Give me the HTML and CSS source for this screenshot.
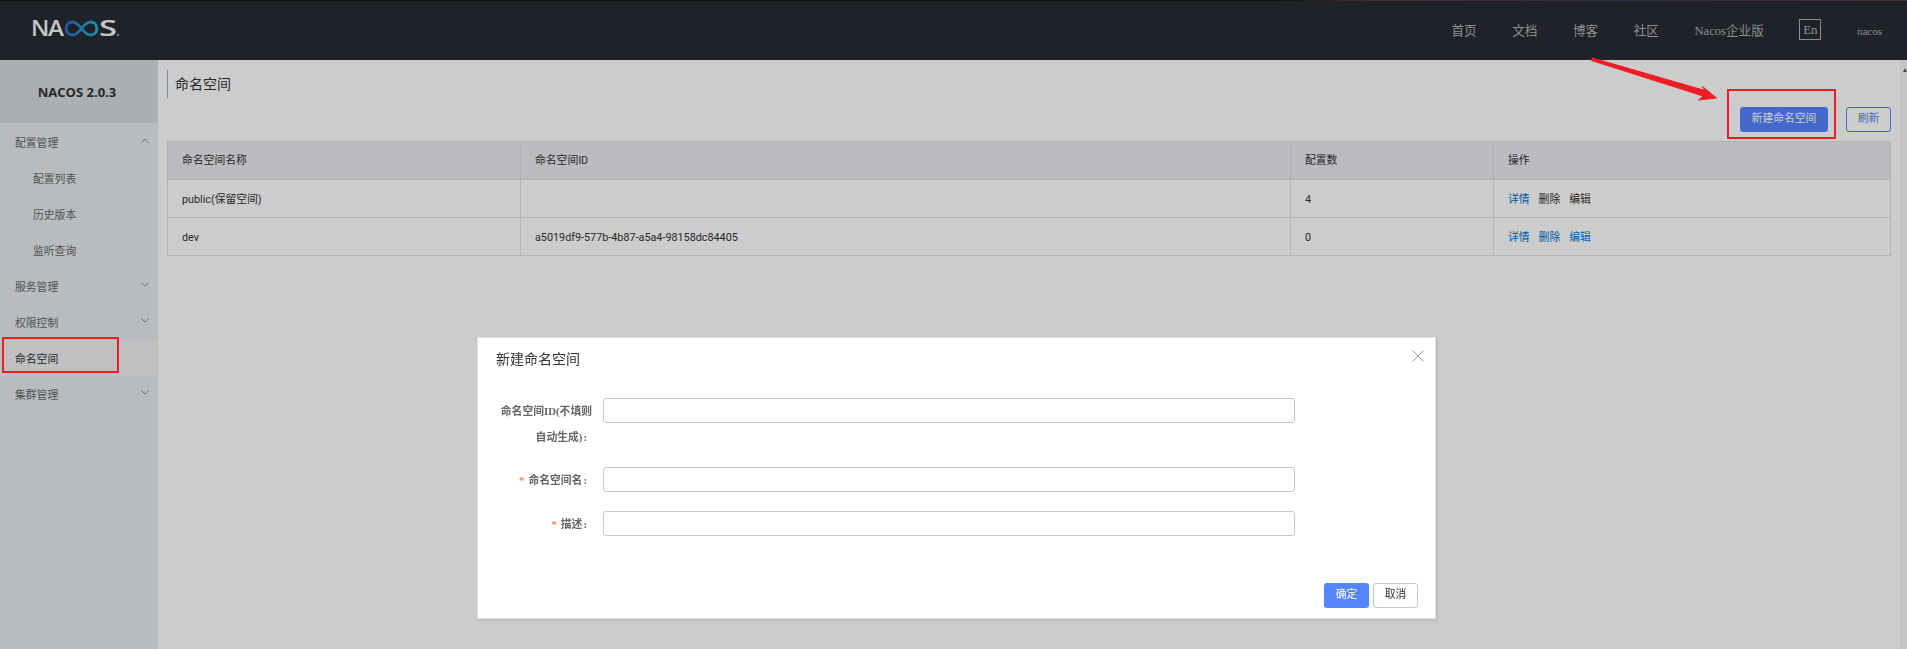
FILE: index.html
```html
<!DOCTYPE html>
<html lang="zh-CN">
<head>
<meta charset="utf-8">
<title>Nacos</title>
<link rel="stylesheet" href="styles.css">
</head>
<body>
<div class="page">
  <header class="topbar">
    <svg class="logo" width="98" height="32" viewBox="-5 -4 98 32">
      <defs>
        <linearGradient id="inf" x1="0" x2="1" y1="0" y2="0">
          <stop offset="0" stop-color="#2a6fd6"/>
          <stop offset="1" stop-color="#22b5d6"/>
        </linearGradient>
      </defs>
      <text class="logo-text" x="-2" y="19" textLength="18.300" lengthAdjust="spacingAndGlyphs">N</text>
      <text class="logo-text" x="15" y="19" textLength="16" lengthAdjust="spacingAndGlyphs">A</text>
      <path d="M48.500 11.500C45 7 42.500 5 39.500 5C35.500 5 33.200 8 33.200 11.500S35.500 18 39.500 18C42.500 18 45 16 48.500 11.500S54.500 5 57.500 5C61.500 5 63.800 8 63.800 11.500S61.500 18 57.500 18C54.500 18 52 16 48.500 11.500Z" fill="none" stroke="url(#inf)" stroke-width="2.800"/>
      <text class="logo-text" x="66" y="19" textLength="18" lengthAdjust="spacingAndGlyphs">S</text>
      <circle cx="85" cy="18" r="1.300" fill="#22b5d6"/>
    </svg>
    <nav class="topnav">
      <a>首页</a><a>文档</a><a>博客</a><a>社区</a><a>Nacos企业版</a>
      <span class="lang">En</span>
      <span class="user">nacos</span>
    </nav>
  </header>
  <div class="main">
    <aside class="sidebar">
      <div class="version">NACOS 2.0.3</div>
      <ul class="menu">
        <li class="item">配置管理<svg class="chev" width="8" height="5" viewBox="0 0 8 5"><polyline points="0.500,4.500 4,1 7.500,4.500"/></svg></li>
        <li class="item sub">配置列表</li>
        <li class="item sub">历史版本</li>
        <li class="item sub">监听查询</li>
        <li class="item">服务管理<svg class="chev" width="8" height="5" viewBox="0 0 8 5"><polyline points="0.500,0.500 4,4 7.500,0.500"/></svg></li>
        <li class="item">权限控制<svg class="chev" width="8" height="5" viewBox="0 0 8 5"><polyline points="0.500,0.500 4,4 7.500,0.500"/></svg></li>
        <li class="item active">命名空间</li>
        <li class="item">集群管理<svg class="chev" width="8" height="5" viewBox="0 0 8 5"><polyline points="0.500,0.500 4,4 7.500,0.500"/></svg></li>
      </ul>
    </aside>
    <main class="content">
      <h1 class="page-title">命名空间</h1>
      <div class="toolbar">
        <button class="btn primary wide">新建命名空间</button>
        <button class="btn outline">刷新</button>
      </div>
      <table class="grid">
        <colgroup>
          <col class="c1"><col class="c2"><col class="c3"><col class="c4">
        </colgroup>
        <thead>
          <tr><th>命名空间名称</th><th>命名空间ID</th><th>配置数</th><th>操作</th></tr>
        </thead>
        <tbody>
          <tr>
            <td>public(保留空间)</td><td></td><td>4</td>
            <td class="ops"><a class="link">详情</a><a>删除</a><a>编辑</a></td>
          </tr>
          <tr>
            <td>dev</td><td>a5019df9-577b-4b87-a5a4-98158dc84405</td><td>0</td>
            <td class="ops"><a class="link">详情</a><a class="link">删除</a><a class="link">编辑</a></td>
          </tr>
        </tbody>
      </table>
    </main>
    <div class="scrollbar"><span class="scroll-up"></span></div>
  </div>
</div>

<div class="mask">
  <section class="dialog">
    <h2 class="dialog-title">新建命名空间</h2>
    <svg class="close" width="12" height="12" viewBox="0 0 12 12"><path d="M0.500 0.500L11.500 11.500M11.500 0.500L0.500 11.500"/></svg>
    <form class="form">
      <label class="label">命名空间ID(不填则自动生成)<span class="colon">:</span></label>
      <input class="input" type="text">
      <label class="label single"><span class="star">*</span>命名空间名<span class="colon">:</span></label>
      <input class="input" type="text">
      <label class="label single"><span class="star">*</span>描述<span class="colon">:</span></label>
      <input class="input" type="text">
    </form>
    <footer class="dialog-foot">
      <button class="btn ok">确定</button>
      <button class="btn cancel">取消</button>
    </footer>
  </section>
</div>

<svg class="marks" width="1907" height="649" viewBox="0 0 1907 649">
  <rect x="3" y="338" width="115" height="34"/>
  <rect x="1728" y="90" width="107" height="48"/>
  <polygon class="arrow" points="1592.500,58 1705,90.500 1702.500,86.500 1716.500,98 1698.500,100 1703,96 1591.500,60.500"/>
</svg>
</body>
</html>
```

FILE: styles.css
```css
* { box-sizing: border-box; }
html, body { margin: 0; height: 100%; overflow: hidden; }
body {
  font-family: "Roboto", "Noto Sans CJK SC", sans-serif;
  font-size: 10.8px;
  color: #333;
  background: #fff;
}
.page { display: flex; flex-direction: column; height: 649px; }

.topbar {
  height: 60px;
  flex: none;
  display: flex;
  align-items: center;
  justify-content: space-between;
  background: #272b33;
  border-top: 1px solid #14161a;
  border-image: linear-gradient(90deg, #14161a 0, #14161a 67%, #5a3a48 72%, #43395a 85%, #5a3a48 100%) 1;
  padding: 0 25px 0 28px;
}
.logo { display: block; margin-top: -3px; }
.logo-text {
  font-family: "Open Sans", sans-serif;
  font-size: 21px;
  font-weight: 600;
  fill: #f6f8f9;
}
.topnav {
  display: flex;
  align-items: center;
  gap: 35.6px;
  font-family: "Liberation Serif", "Noto Sans CJK SC", serif;
  font-size: 12.6px;
  color: #b2b2b2;
  margin-top: -2px;
}
.lang {
  width: 22px;
  height: 21px;
  border: 1px solid #b2b2b2;
  display: flex;
  align-items: center;
  justify-content: center;
  font-size: 13px;
}
.user { font-size: 11px; margin-top: 3px; }

.main { flex: 1; display: flex; min-height: 0; }

.sidebar { width: 158px; flex: none; background: #e8ecef; }
.version {
  height: 63px;
  background: #d7dbdf;
  display: flex;
  align-items: center;
  justify-content: center;
  font-family: "Open Sans", sans-serif;
  font-size: 13px;
  font-weight: 700;
  color: #333;
  padding-right: 4px;
}
.menu { list-style: none; margin: 1px 0 0; padding: 0; }
.item {
  height: 36px;
  display: flex;
  align-items: center;
  justify-content: space-between;
  padding: 0 9px 0 15px;
  color: #666;
}
.item.sub { padding-left: 33px; }
.item.active { background: #f0eff3; color: #333; }
.chev { fill: none; stroke: #888; stroke-width: 1; margin-top: -3px; }

.content { flex: 1; min-width: 0; padding: 10px 9px 0; background: #fff; }
.page-title {
  margin: 0;
  height: 28px;
  border-left: 1px solid #93b5df;
  padding-left: 7px;
  font-size: 14px;
  font-weight: 400;
  line-height: 28px;
  color: #333;
}
.toolbar { display: flex; justify-content: flex-end; gap: 18px; margin: 9px 0; }
.btn {
  height: 25px;
  padding: 0;
  border: 1px solid transparent;
  border-radius: 3px;
  font-family: inherit;
  font-size: 10.8px;
  line-height: 1;
  background: none;
}
.wide { width: 88px; }
.primary { background: #5584ff; color: #fff; }
.outline { width: 45px; border-color: #5584ff; color: #5584ff; }

.grid {
  width: 100%;
  table-layout: fixed;
  border-collapse: collapse;
  color: #333;
}
.c1 { width: 353px; }
.c2 { width: 770px; }
.c3 { width: 203px; }
.grid th, .grid td {
  height: 38px;
  padding: 0 14px;
  border: 1px solid #e1e3e8;
  text-align: left;
  font-weight: 400;
  line-height: 14px;
}
.grid td { padding-top: 2px; }
.grid thead th { background: #ebecf0; border-color: #dcdee3; }
.ops a { margin-right: 9px; }
.ops .link { color: #0073cc; }

.scrollbar { width: 7px; flex: none; background: #f5f5f5; position: relative; }
.scroll-up {
  position: absolute;
  top: 8px;
  left: 3px;
  width: 0;
  height: 0;
  border-left: 2px solid transparent;
  border-right: 2px solid transparent;
  border-bottom: 4px solid #555;
}

.mask { position: fixed; inset: 0; background: rgba(0, 0, 0, 0.2); }
.dialog {
  position: absolute;
  left: 477px;
  top: 337px;
  width: 959px;
  height: 282px;
  background: #fff;
  box-shadow: inset 0 0 0 1px #e6e6e6, 1px 1px 3px rgba(0, 0, 0, 0.15);
  display: flex;
  flex-direction: column;
  padding: 0 18px 11px 19px;
}
.dialog-title {
  margin: 0;
  height: 44px;
  font-size: 14px;
  font-weight: 400;
  line-height: 44px;
  color: #333;
}
.close {
  position: absolute;
  top: 13px;
  right: 12px;
  fill: none;
  stroke: #999;
  stroke-width: 1;
}
.form {
  display: grid;
  grid-template-columns: 92px 692px;
  column-gap: 11px;
  row-gap: 17px;
  align-items: start;
  margin: 17px 0 0 4px;
}
.label {
  text-align: right;
  font-family: "Liberation Serif", "Noto Sans CJK SC", serif;
  font-weight: 700;
  line-height: 25.5px;
  padding-top: 1px;
  color: #666;
}
.label.single { min-height: 27px; }
.colon { margin: 0 5px 0 1px; }
.star { color: #fa7d3c; margin-right: 4px; }
.input {
  display: block;
  width: 692px;
  height: 25px;
  margin: 0;
  border: 1px solid #c4c6cf;
  border-radius: 3px;
  background: #fff;
  outline: none;
}
.dialog-foot { margin-top: auto; display: flex; justify-content: flex-end; gap: 4px; }
.ok { width: 45px; background: #5584ff; color: #fff; }
.cancel { width: 45px; border-color: #c4c6cf; color: #333; background: #fff; }

.marks { position: fixed; left: 0; top: 0; pointer-events: none; }
.marks rect { fill: none; stroke: #ee1c25; stroke-width: 2; }
.marks .arrow { fill: #ee1c25; stroke: #ee1c25; stroke-width: 1; stroke-linejoin: round; }
```
